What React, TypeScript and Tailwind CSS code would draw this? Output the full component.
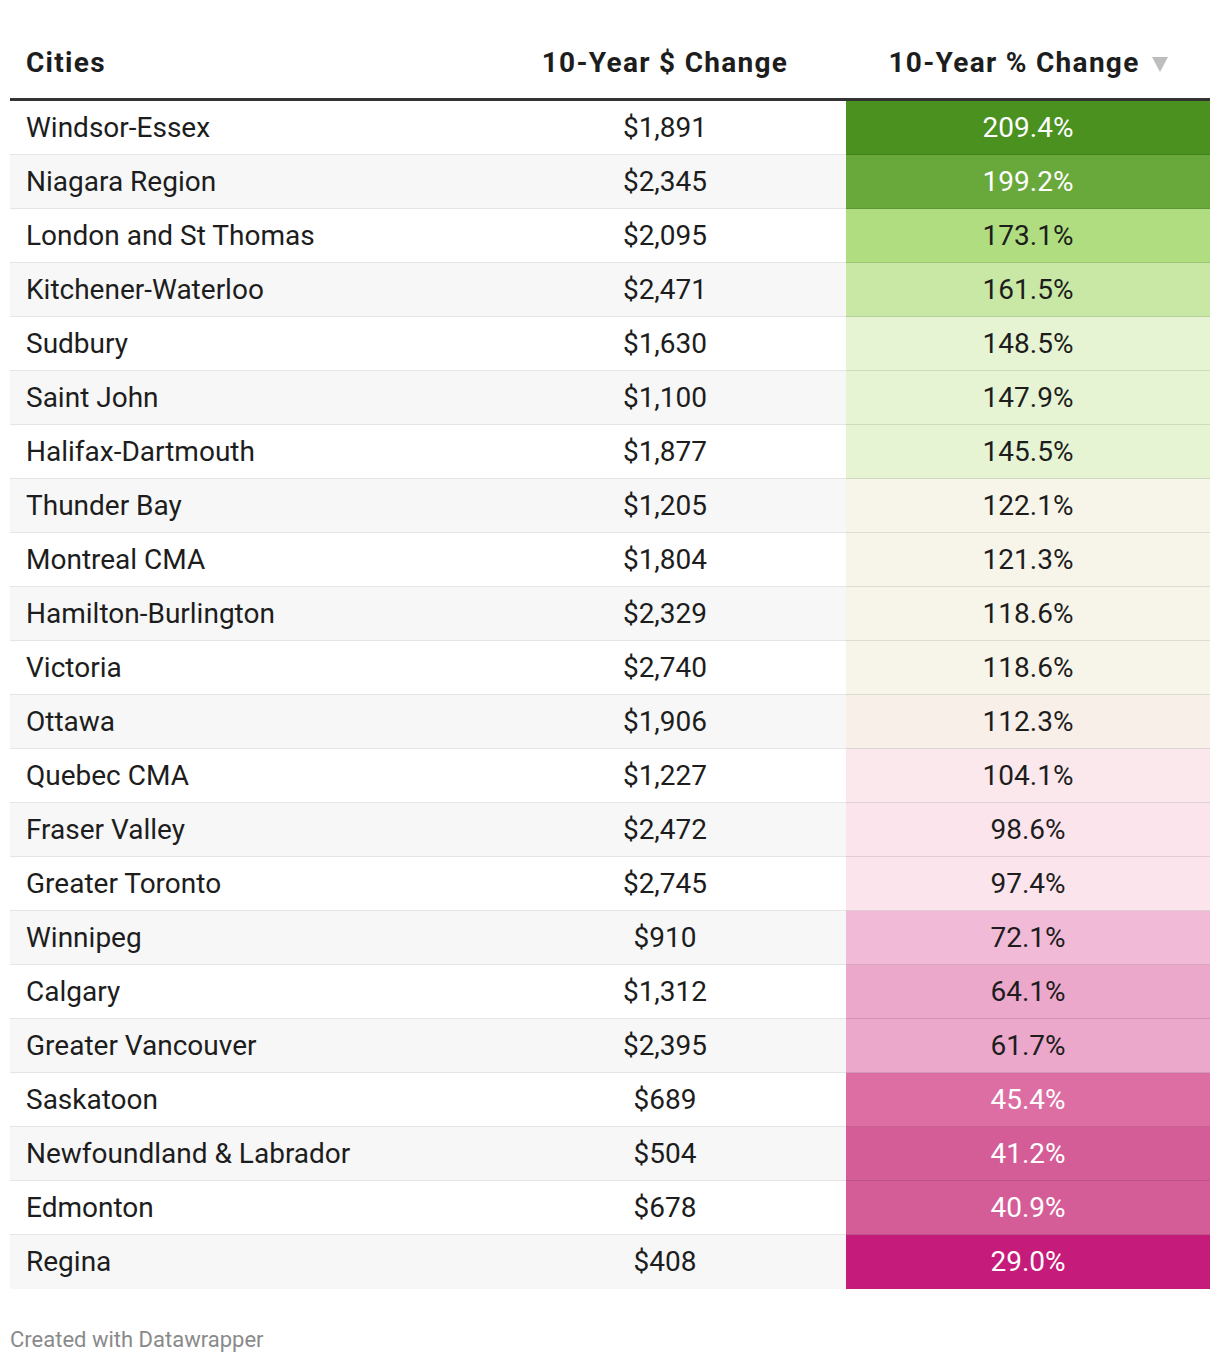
const ROWS = [
  { city: "Windsor-Essex", dollar: "$1,891", pct: "209.4%", bg: "bg-[#4b911f]", light: true },
  { city: "Niagara Region", dollar: "$2,345", pct: "199.2%", bg: "bg-[#69a83a]", light: true },
  { city: "London and St Thomas", dollar: "$2,095", pct: "173.1%", bg: "bg-[#b0dd80]" },
  { city: "Kitchener-Waterloo", dollar: "$2,471", pct: "161.5%", bg: "bg-[#c9e8a5]" },
  { city: "Sudbury", dollar: "$1,630", pct: "148.5%", bg: "bg-[#e6f4d3]" },
  { city: "Saint John", dollar: "$1,100", pct: "147.9%", bg: "bg-[#e6f4d3]" },
  { city: "Halifax-Dartmouth", dollar: "$1,877", pct: "145.5%", bg: "bg-[#e6f4d3]" },
  { city: "Thunder Bay", dollar: "$1,205", pct: "122.1%", bg: "bg-[#f7f5ea]" },
  { city: "Montreal CMA", dollar: "$1,804", pct: "121.3%", bg: "bg-[#f7f5ea]" },
  { city: "Hamilton-Burlington", dollar: "$2,329", pct: "118.6%", bg: "bg-[#f7f5ea]" },
  { city: "Victoria", dollar: "$2,740", pct: "118.6%", bg: "bg-[#f7f5ea]" },
  { city: "Ottawa", dollar: "$1,906", pct: "112.3%", bg: "bg-[#f8efe9]" },
  { city: "Quebec CMA", dollar: "$1,227", pct: "104.1%", bg: "bg-[#fbe8ec]" },
  { city: "Fraser Valley", dollar: "$2,472", pct: "98.6%", bg: "bg-[#fbe4ec]" },
  { city: "Greater Toronto", dollar: "$2,745", pct: "97.4%", bg: "bg-[#fbe4ec]" },
  { city: "Winnipeg", dollar: "$910", pct: "72.1%", bg: "bg-[#f1bbd7]" },
  { city: "Calgary", dollar: "$1,312", pct: "64.1%", bg: "bg-[#eca8cb]" },
  { city: "Greater Vancouver", dollar: "$2,395", pct: "61.7%", bg: "bg-[#eca8cb]" },
  { city: "Saskatoon", dollar: "$689", pct: "45.4%", bg: "bg-[#dc6ea3]", light: true },
  { city: "Newfoundland & Labrador", dollar: "$504", pct: "41.2%", bg: "bg-[#d45d97]", light: true },
  { city: "Edmonton", dollar: "$678", pct: "40.9%", bg: "bg-[#d45d97]", light: true },
  { city: "Regina", dollar: "$408", pct: "29.0%", bg: "bg-[#c51b7b]", light: true },
];

export default function App() {
  return (
    <div className="min-h-[1364px] bg-white px-[10px] font-['Roboto',sans-serif] text-[#1d1d1d]">
      <div className="grid h-[98px] grid-cols-[474px_362px_364px] items-center pt-[28px] text-[28px] font-bold tracking-[1.3px]">
        <div className="pl-[16px]">Cities</div>
        <div className="text-center">10-Year $ Change</div>
        <div className="flex items-center justify-center gap-[12px]">
          <span>10-Year % Change</span>
          <svg width="16" height="15" viewBox="0 0 16 15" className="mt-[3px]">
            <path d="M0 0 L16 0 L8 15 Z" fill="#bdbdbd" />
          </svg>
        </div>
      </div>
      <div className="border-t-[3px] border-[#333333]">
        {ROWS.map((r, i) => (
          <div
            key={r.city}
            className={`grid h-[54px] grid-cols-[474px_362px_364px] text-[28px] ${
              i % 2 === 1 ? "bg-[#f7f7f7]" : "bg-white"
            } ${i < ROWS.length - 1 ? "border-b border-[#e5e5e5]" : ""}`}
          >
            <div className="flex items-center pl-[16px]">{r.city}</div>
            <div className="flex items-center justify-center">{r.dollar}</div>
            <div
              className={`flex items-center justify-center ${r.bg} ${
                r.light ? "text-white" : ""
              } ${i < ROWS.length - 1 ? "-mb-px border-b border-black/10" : ""}`}
            >
              {r.pct}
            </div>
          </div>
        ))}
      </div>
      <div className="mt-[34px] text-[22px] text-[#8a8a8a]">Created with Datawrapper</div>
    </div>
  );
}
